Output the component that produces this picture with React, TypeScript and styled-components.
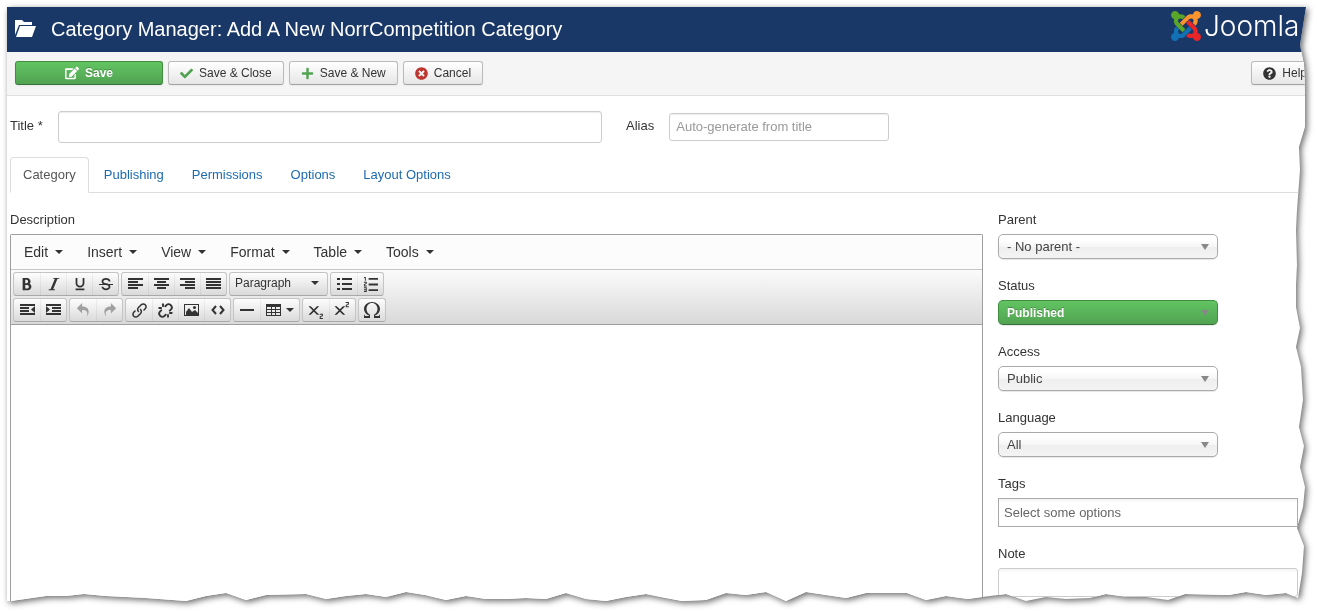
import React from 'react';
import styled, { createGlobalStyle, css } from 'styled-components';
import {
  ImBold, ImItalic, ImUnderline, ImStrikethrough, ImUndo2, ImRedo2, ImLink,
  ImSubscript, ImSuperscript, ImOmega, ImListNumbered,
} from 'react-icons/im';
import { FaCheck, FaEdit, FaPlus, FaTimesCircle, FaQuestionCircle } from 'react-icons/fa';
import { Unlink } from 'lucide-react';

const GlobalStyle = createGlobalStyle`
  *, *::before, *::after { box-sizing: border-box; }
  body {
    margin: 0;
    background: #fff;
    color: #333;
    font: 13px/18px "Liberation Sans", Arial, sans-serif;
  }
  button, input, select, textarea { font: inherit; color: inherit; margin: 0; }
`;

/* Torn edge: [position along the side, depth of the tear], in pixels of a 1299 x 595 sheet. */
const RIGHT_TEAR: [number, number][] = [
  [0, 0], [38, 6], [58, 2], [88, 1], [120, 1], [140, 7], [163, 6], [203, 9], [223, 10], [258, 9],
  [278, 10], [300, 10], [321, 6], [340, 10], [360, 5], [393, 3], [420, 7], [439, 2], [460, 6],
  [480, 1], [500, 3], [521, 9], [539, 2], [566, 4], [591, 8],
];
const BOTTOM_TEAR: [number, number][] = [
  [1291, 4], [1279, 9], [1259, 7], [1239, 10], [1222, 7], [1178, 8], [1161, 2], [1139, 5], [1120, 5],
  [1099, 8], [1083, 4], [1059, 3], [1039, 5], [1019, 1], [999, 8], [975, 5], [961, 3], [939, 6],
  [919, 2], [900, 9], [859, 9], [839, 4], [819, 7], [799, 10], [779, 1], [759, 10], [739, 7],
  [719, 9], [699, 2], [675, 1], [659, 4], [639, 8], [619, 5], [599, 1], [579, 3], [559, 9], [539, 3],
  [519, 4], [499, 3], [479, 3], [459, 6], [439, 2], [418, 7], [399, 10], [379, 5], [359, 8], [339, 6],
  [319, 3], [299, 8], [259, 7], [239, 2], [219, 9], [199, 6], [179, 1], [139, 4], [99, 6], [77, 8],
  [59, 6], [39, 6], [4, 1], [0, 1],
];
const pct = (n: number, total: number) => `${((n / total) * 100).toFixed(2)}%`;
const tornShape = `polygon(0 0, ${[
  ...RIGHT_TEAR.map(([y, d]) => `calc(100% - ${d}px) ${pct(y, 595)}`),
  ...BOTTOM_TEAR.map(([x, d]) => `${pct(x, 1299)} calc(100% - ${d}px)`),
].join(', ')})`;

const Shadow = styled.div`
  padding: 7px 11px 11px 7px;
  filter: drop-shadow(2px 2px 3px rgba(0, 0, 0, 0.6));
`;

const Sheet = styled.div`
  display: flex;
  flex-direction: column;
  min-height: calc(100vh - 18px);
  background: #fff;
  overflow: hidden;
  clip-path: ${tornShape};
`;

const Header = styled.header`
  display: flex;
  align-items: center;
  height: 45px;
  padding: 0 0 2px 8px;
  background: #1a3867;
  color: #fff;
`;

const PageTitle = styled.h1`
  margin: 0 auto 0 15px;
  font-size: 20px;
  line-height: 24px;
  font-weight: 400;
  white-space: nowrap;
`;

const Brand = styled.div`
  display: flex;
  align-items: center;
  gap: 3px;
  flex: none;
  width: 135px;
  margin-bottom: 6px;
  overflow: hidden;
  font: 300 28px/32px Inter, sans-serif;
`;

const ActionBar = styled.div`
  display: flex;
  gap: 5px;
  padding: 9px 0 10px 8px;
  overflow: hidden;
  background: #f5f5f5;
  border-bottom: 1px solid #dfdfdf;
`;

const greenFace = css`
  color: #fff;
  font-size: 12px;
  font-weight: 700;
  background: linear-gradient(#62c462, #51a351);
  border: 1px solid #3f8f3f;
  border-bottom-color: #387038;
  text-shadow: 0 -1px 0 rgba(0, 0, 0, 0.25);
`;

const ActionButton = styled.button<{ $primary?: boolean; $icon?: string; $end?: boolean }>`
  display: flex;
  align-items: center;
  justify-content: center;
  gap: 6px;
  flex: none;
  height: 24px;
  padding: 0 11px;
  border: 1px solid #bbb;
  border-bottom-color: #a2a2a2;
  border-radius: 3px;
  background: linear-gradient(#fff, #e6e6e6);
  box-shadow: 0 1px 2px rgba(0, 0, 0, 0.05);
  font-size: 12px;
  svg { color: ${p => p.$icon ?? 'inherit'}; }
  ${p => p.$primary && css`
    ${greenFace}
    width: 148px;
  `}
  ${p => p.$end && 'margin: 0 -13px 0 auto;'}
`;

const Main = styled.main`
  display: flex;
  flex-direction: column;
  flex: 1;
  padding-left: 3px;
`;

const TitleRow = styled.div`
  display: flex;
  align-items: center;
  padding: 15px 0 14px;
  label { margin-top: -2px; }
`;

const TextInput = styled.input<{ $large?: boolean }>`
  width: ${p => (p.$large ? '42%' : '220px')};
  height: ${p => (p.$large ? '32px' : '28px')};
  margin: ${p => (p.$large ? '0 24px 0 15px' : '0 0 0 15px')};
  padding: 3px 6px 5px;
  border: 1px solid #ccc;
  border-radius: 3px;
  box-shadow: inset 0 1px 1px rgba(0, 0, 0, 0.075);
  &::placeholder { color: #999; opacity: 1; }
`;

const Tabs = styled.nav`
  display: flex;
  gap: 2px;
  border-bottom: 1px solid #ddd;
`;

const Tab = styled.a<{ $active?: boolean }>`
  margin-bottom: -1px;
  padding: 8px 12px;
  border: 1px solid ${p => (p.$active ? '#ddd' : 'transparent')};
  border-bottom-color: ${p => (p.$active ? '#fff' : 'transparent')};
  border-radius: 4px 4px 0 0;
  color: ${p => (p.$active ? '#555' : '#1d6cb0')};
  text-decoration: none;
`;

const Columns = styled.div`
  display: grid;
  grid-template-columns: 1fr 300px;
  gap: 15px;
  flex: 1;
  padding: 18px 8px 0 0;
`;

const Column = styled.div`
  display: flex;
  flex-direction: column;
`;

const FieldLabel = styled.label`
  display: block;
  margin-bottom: 5px;
`;

const Editor = styled.div`
  display: flex;
  flex-direction: column;
  flex: 1;
  border: 1px solid #9e9e9e;
  border-bottom: 0;
  border-radius: 2px 2px 0 0;
`;

const MenuBar = styled.div`
  display: flex;
  height: 35px;
  padding-left: 1px;
  background: #fcfcfc;
  border-bottom: 1px solid #c5c5c5;
`;

const MenuButton = styled.button`
  display: flex;
  align-items: center;
  gap: 7px;
  padding: 0 12px;
  border: 0;
  background: none;
  font-size: 14px;
`;

const Caret = styled.span`
  border: 4px solid transparent;
  border-top-color: currentColor;
  border-bottom: 0;
`;

const Toolbars = styled.div`
  display: flex;
  flex-direction: column;
  gap: 2px;
  padding: 2px;
  background: linear-gradient(#fbfbfb, #d9d9d9);
  border-bottom: 1px solid #9e9e9e;
`;

const ToolRow = styled.div`
  display: flex;
  gap: 2px;
`;

const ToolGroup = styled.div`
  display: flex;
  height: 24px;
  border: 1px solid #c4c4c4;
  border-bottom-color: #a9a9a9;
  border-radius: 3px;
  background: linear-gradient(#fdfdfd, #dadada);
`;

const ToolButton = styled.button<{ $wide?: boolean }>`
  display: flex;
  align-items: center;
  justify-content: center;
  gap: 5px;
  width: ${p => (p.$wide ? '39px' : '26px')};
  padding: 0;
  border: 0;
  background: none;
  &:disabled { color: #a0a0a0; }
  & + & { border-left: 1px solid rgba(0, 0, 0, 0.05); }
`;

const FormatButton = styled.button`
  display: flex;
  align-items: center;
  justify-content: space-between;
  width: 97px;
  padding: 0 8px 2px 5px;
  border: 0;
  background: none;
  font-size: 12px;
`;

const EditArea = styled.textarea`
  flex: 1;
  width: 100%;
  padding: 8px;
  border: 0;
  background: #fff;
  resize: none;
`;

const Field = styled.div`
  margin-bottom: 18px;
`;

const SelectBox = styled.div`
  position: relative;
  width: 220px;
  &::after {
    content: '';
    position: absolute;
    right: 9px;
    top: 10px;
    border: 4px solid transparent;
    border-top: 6px solid #888;
    border-bottom: 0;
    pointer-events: none;
  }
`;

const Select = styled.select<{ $green?: boolean }>`
  appearance: none;
  display: block;
  width: 100%;
  height: 25px;
  padding: 0 8px;
  border: 1px solid #aaa;
  border-radius: 5px;
  background: linear-gradient(#fff 20%, #f6f6f6 50%, #eee 52%, #f4f4f4);
  box-shadow: 0 1px 1px rgba(0, 0, 0, 0.1);
  color: #444;
  ${p => p.$green && greenFace}
`;

const SideInput = styled.input<{ $square?: boolean }>`
  display: block;
  width: 100%;
  height: 29px;
  padding: 4px 5px;
  border: 1px solid ${p => (p.$square ? '#aaa' : '#ccc')};
  border-radius: ${p => (p.$square ? '0' : '3px')};
  background: linear-gradient(#f4f4f4, #fff 4px);
  &::placeholder { color: #666; opacity: 1; }
`;

const JoomlaMark = () => (
  <svg width="30" height="30" viewBox="0 32 448 448" aria-hidden="true">
    <path fill="#5aa62b" d="M.6 92.1C.6 58.8 27.4 32 60.4 32c30 0 54.5 21.9 59.2 50.2 32.6-7.6 67.1.6 96.5 30l-44.3 44.3c-20.5-20.5-42.6-16.3-55.4-3.5-14.3 14.3-14.3 37.9 0 52.2l99.5 99.5-44 44.3c-87.7-87.2-49.7-49.7-99.8-99.7-26.8-26.5-35-64.8-24.8-98.9C20.4 144.6.6 120.7.6 92.1z" />
    <path fill="#f9932e" d="M130.1 208.5l44.3 44.3c10-10 89.7-89.7 99.7-99.8 14.3-14.3 37.6-14.3 51.9 0 12.8 12.8 17 35-3.5 55.4l44 44.3c31.2-31.2 38.5-67.6 28.9-101.2 29.2-4.1 51.9-29.2 51.9-59.5 0-33.2-26.8-60.1-59.8-60.1-30.3 0-55.4 22.5-59.5 51.6-33.8-9.9-71.7-1.5-98.3 25.1-18.3 19.1-71.1 71.5-99.6 99.9z" />
    <path fill="#e8262a" d="M396.4 360.7c8.2-32.7-.9-68.5-26.3-93.9-11.8-12.2 5 4.7-99.5-99.7l-44.3 44.3 99.7 99.7c14.3 14.3 14.3 37.6 0 51.9-12.8 12.8-35 17-55.4-3.5l-44 44.3c27.6 30.2 68 38.8 102.7 28 5.5 27.4 29.7 48.1 58.9 48.1 33 0 59.8-26.8 59.8-60.1 0-30.2-22.5-55-51.6-59.1z" />
    <path fill="#1271b5" d="M312.1 307.6l-44-44.3c-87 86.4-50.4 50.4-99.7 99.8-14.3 14.3-37.6 14.3-51.9 0-13.1-13.4-16.9-35.3 3.2-55.4l-44-44.3c-30.2 30.2-38 65.2-29.5 98.3-26.7 6-46.2 29.9-46.2 58.2C0 453.2 26.8 480 59.8 480c28.6 0 52.5-19.8 58.6-46.7 32.7 8.2 68.5-.6 94.2-26 32.1-32 12.2-12.4 99.5-99.7z" />
  </svg>
);

const FolderIcon = () => (
  <svg width="21" height="17" viewBox="0 0 21 17" fill="#fff" aria-hidden="true">
    <path d="M0 15V0h7l2 2h8v3H4z" />
    <path d="M5 6h16l-4 11H1z" />
  </svg>
);

/* Each bar is [x, y, width] with a height of two pixels. */
const Bars = ({ bars, extra }: { bars: number[][]; extra?: string }) => (
  <svg width="15" height="12" viewBox="0 0 15 12" fill="currentColor" shapeRendering="crispEdges">
    {bars.map(([x, y, w]) => <rect key={`${x}-${y}`} x={x} y={y} width={w} height="2" />)}
    {extra && <path d={extra} shapeRendering="auto" />}
  </svg>
);
const AlignLeft = () => <Bars bars={[[0, 0, 15], [0, 3, 10], [0, 6, 15], [0, 9, 10]]} />;
const AlignCenter = () => <Bars bars={[[0, 0, 15], [3, 3, 9], [0, 6, 15], [3, 9, 9]]} />;
const AlignRight = () => <Bars bars={[[0, 0, 15], [5, 3, 10], [0, 6, 15], [5, 9, 10]]} />;
const AlignFull = () => <Bars bars={[[0, 0, 15], [0, 3, 15], [0, 6, 15], [0, 9, 15]]} />;
const Outdent = () => <Bars bars={[[0, 0, 15], [0, 3, 9], [0, 6, 9], [0, 9, 15]]} extra="M15 2v7l-4-3.500z" />;
const Indent = () => <Bars bars={[[0, 0, 15], [6, 3, 9], [6, 6, 9], [0, 9, 15]]} extra="M0 2v7l4-3.500z" />;
const Bullets = () => (
  <Bars bars={[[0, 0, 3], [5, 0, 10], [0, 5, 3], [5, 5, 10], [0, 10, 3], [5, 10, 10]]} />
);

const TableIcon = () => (
  <svg width="15" height="13" viewBox="0 0 15 13" fill="currentColor" shapeRendering="crispEdges">
    <path fillRule="evenodd" d="M0 0h15v12H0zM1 3h4v2H1zM6 3h3v2H6zM10 3h4v2h-4zM1 6h4v2H1zM6 6h3v2H6zM10 6h4v2h-4zM1 9h4v2H1zM6 9h3v2H6zM10 9h4v2h-4z" />
  </svg>
);

const PictureIcon = () => (
  <svg width="15" height="13" viewBox="0 0 15 13" fill="currentColor">
    <path fillRule="evenodd" d="M0 0h15v12H0zM1 1v10h13V1z" />
    <path d="M2 11V8l3-4 3 4 3-2 3 3v2z" />
    <circle cx="10.500" cy="3.500" r="1.500" />
  </svg>
);

const CodeIcon = () => (
  <svg width="14" height="12" viewBox="0 0 14 12" fill="none" stroke="currentColor" strokeWidth="2">
    <path d="M5 2 1.500 6 5 10M9 2l3.500 4L9 10" />
  </svg>
);

const RuleIcon = () => (
  <svg width="16" height="14" viewBox="0 0 16 14" fill="currentColor">
    <path d="M1 6h14v2H1z" />
  </svg>
);

const SidebarSelect = ({ id, label, value, green }: { id: string; label: string; value: string; green?: boolean }) => (
  <Field>
    <FieldLabel htmlFor={id}>{label}</FieldLabel>
    <SelectBox>
      <Select id={id} $green={green} defaultValue={value}>
        <option>{value}</option>
      </Select>
    </SelectBox>
  </Field>
);

type Tool = [string, React.ReactNode, boolean?];
const Tools = ({ items }: { items: Tool[] }) => (
  <ToolGroup>
    {items.map(([name, icon, disabled]) => (
      <ToolButton key={name} type="button" aria-label={name} disabled={disabled}>{icon}</ToolButton>
    ))}
  </ToolGroup>
);

export default function App() {
  return (
    <>
      <GlobalStyle />
      <Shadow>
        <Sheet>
          <Header>
            <FolderIcon />
            <PageTitle>Category Manager: Add A New NorrCompetition Category</PageTitle>
            <Brand><JoomlaMark />Joomla</Brand>
          </Header>

          <ActionBar>
            <ActionButton type="button" $primary><FaEdit size={14} />Save</ActionButton>
            <ActionButton type="button" $icon="#51a351"><FaCheck size={13} />Save &amp; Close</ActionButton>
            <ActionButton type="button" $icon="#51a351"><FaPlus size={13} />Save &amp; New</ActionButton>
            <ActionButton type="button" $icon="#bd362f"><FaTimesCircle size={13} />Cancel</ActionButton>
            <ActionButton type="button" $end><FaQuestionCircle size={13} />Help</ActionButton>
          </ActionBar>

          <Main>
            <TitleRow>
              <label htmlFor="title">Title *</label>
              <TextInput id="title" $large />
              <label htmlFor="alias">Alias</label>
              <TextInput id="alias" placeholder="Auto-generate from title" />
            </TitleRow>

            <Tabs>
              <Tab href="#category" $active>Category</Tab>
              <Tab href="#publishing">Publishing</Tab>
              <Tab href="#permissions">Permissions</Tab>
              <Tab href="#options">Options</Tab>
              <Tab href="#layout">Layout Options</Tab>
            </Tabs>

            <Columns>
              <Column>
                <FieldLabel htmlFor="description">Description</FieldLabel>
                <Editor>
                  <MenuBar>
                    {['Edit', 'Insert', 'View', 'Format', 'Table', 'Tools'].map(name => (
                      <MenuButton key={name} type="button">{name}<Caret /></MenuButton>
                    ))}
                  </MenuBar>
                  <Toolbars>
                    <ToolRow>
                      <Tools items={[
                        ['Bold', <ImBold size={14} />], ['Italic', <ImItalic size={14} />],
                        ['Underline', <ImUnderline size={14} />], ['Strikethrough', <ImStrikethrough size={14} />],
                      ]} />
                      <Tools items={[
                        ['Align left', <AlignLeft />], ['Align center', <AlignCenter />],
                        ['Align right', <AlignRight />], ['Justify', <AlignFull />],
                      ]} />
                      <ToolGroup><FormatButton type="button">Paragraph<Caret /></FormatButton></ToolGroup>
                      <Tools items={[
                        ['Bullet list', <Bullets />], ['Numbered list', <ImListNumbered size={15} />],
                      ]} />
                    </ToolRow>
                    <ToolRow>
                      <Tools items={[['Decrease indent', <Outdent />], ['Increase indent', <Indent />]]} />
                      <Tools items={[['Undo', <ImUndo2 size={14} />, true], ['Redo', <ImRedo2 size={14} />, true]]} />
                      <Tools items={[
                        ['Insert link', <ImLink size={15} />], ['Remove link', <Unlink size={15} strokeWidth={3} />],
                        ['Insert image', <PictureIcon />], ['Source code', <CodeIcon />],
                      ]} />
                      <ToolGroup>
                        <ToolButton type="button" aria-label="Horizontal line"><RuleIcon /></ToolButton>
                        <ToolButton type="button" aria-label="Table" $wide><TableIcon /><Caret /></ToolButton>
                      </ToolGroup>
                      <Tools items={[
                        ['Subscript', <ImSubscript size={17} />], ['Superscript', <ImSuperscript size={17} />],
                      ]} />
                      <Tools items={[['Special character', <ImOmega size={16} />]]} />
                    </ToolRow>
                  </Toolbars>
                  <EditArea id="description" />
                </Editor>
              </Column>

              <Column>
                <SidebarSelect id="parent" label="Parent" value="- No parent -" />
                <SidebarSelect id="status" label="Status" value="Published" green />
                <SidebarSelect id="access" label="Access" value="Public" />
                <SidebarSelect id="language" label="Language" value="All" />
                <Field>
                  <FieldLabel htmlFor="tags">Tags</FieldLabel>
                  <SideInput id="tags" $square placeholder="Select some options" />
                </Field>
                <div>
                  <FieldLabel htmlFor="note">Note</FieldLabel>
                  <SideInput id="note" />
                </div>
              </Column>
            </Columns>
          </Main>
        </Sheet>
      </Shadow>
    </>
  );
}
